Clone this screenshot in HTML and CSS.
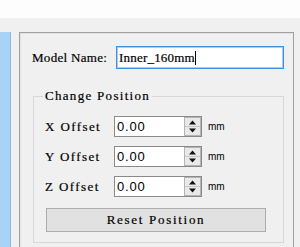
FILE: index.html
```html
<!DOCTYPE html>
<html>
<head>
<meta charset="utf-8">
<link rel="stylesheet" href="styles.css">
</head>
<body>
<div class="top"></div>
<div class="main">
  <div class="side"></div>
  <div class="panel">
    <div class="name-row">
      <span class="name-label">Model Name:</span>
      <div class="name-input"><span>Inner_160mm</span><span class="caret"></span></div>
    </div>
    <fieldset class="group">
      <legend>Change Position</legend>
      <div class="rows">
        <span class="lbl">X Offset</span>
        <div class="spin"><span class="val">0.00</span><svg class="btns" width="17" height="19" viewBox="0 0 17 19"><rect x="0.5" y="0.5" width="16" height="18" fill="#e9e9e9" stroke="#b4b4b4"/><line x1="1" y1="9.5" x2="16" y2="9.5" stroke="#c8c8c8"/><path d="M8.5 3.5 L12 7.5 L5 7.5 Z" fill="#111"/><path d="M5 11.5 L12 11.5 L8.5 15.5 Z" fill="#111"/></svg></div>
        <span class="unit">mm</span>

        <span class="lbl">Y Offset</span>
        <div class="spin"><span class="val">0.00</span><svg class="btns" width="17" height="19" viewBox="0 0 17 19"><rect x="0.5" y="0.5" width="16" height="18" fill="#e9e9e9" stroke="#b4b4b4"/><line x1="1" y1="9.5" x2="16" y2="9.5" stroke="#c8c8c8"/><path d="M8.5 3.5 L12 7.5 L5 7.5 Z" fill="#111"/><path d="M5 11.5 L12 11.5 L8.5 15.5 Z" fill="#111"/></svg></div>
        <span class="unit">mm</span>

        <span class="lbl">Z Offset</span>
        <div class="spin"><span class="val">0.00</span><svg class="btns" width="17" height="19" viewBox="0 0 17 19"><rect x="0.5" y="0.5" width="16" height="18" fill="#e9e9e9" stroke="#b4b4b4"/><line x1="1" y1="9.5" x2="16" y2="9.5" stroke="#c8c8c8"/><path d="M8.5 3.5 L12 7.5 L5 7.5 Z" fill="#111"/><path d="M5 11.5 L12 11.5 L8.5 15.5 Z" fill="#111"/></svg></div>
        <span class="unit">mm</span>
      </div>
      <div class="reset">Reset Position</div>
    </fieldset>
  </div>
</div>
</body>
</html>
```
FILE: styles.css
```css
html, body {
  margin: 0;
  padding: 0;
  width: 300px;
  height: 247px;
  overflow: hidden;
  background: #f0f0f0;
  font-family: "Liberation Serif", "DejaVu Serif", serif;
  font-size: 13px;
  color: #000;
}
.top {
  height: 18px;
  background: #fdfdfd;
}
.main {
  display: flex;
  margin-top: 14px;
  height: 215px;
  overflow: hidden;
}
.side {
  width: 10px;
  background: #a9d3f6;
  border-right: 1px solid #8fb6d8;
}
.panel {
  margin-left: 8px;
  width: 275px;
  height: 240px;
  box-sizing: border-box;
  border: 1px solid #a0a0a0;
  box-shadow: inset 1px 1px 0 #e2e2e2;
  padding: 13px 0 0 12px;
}
.name-row {
  display: flex;
  align-items: center;
  height: 23px;
}
.name-label {
  width: 84px;
  letter-spacing: 0.3px;
  -webkit-text-stroke: 0.2px #000;
}
.name-input {
  width: 168px;
  height: 23px;
  box-sizing: border-box;
  border: 1px solid #3f8fde;
  box-shadow: inset 0 0 0 1px #a9cdf1;
  background: #fff;
  display: flex;
  align-items: center;
  padding-left: 2px;
  letter-spacing: 0.2px;
  -webkit-text-stroke: 0.2px #000;
}
.caret {
  width: 1px;
  height: 14px;
  background: #000;
  margin-left: 0;
}
.group {
  margin: 20px 0 0 1px;
  width: 251px;
  box-sizing: border-box;
  border: 1px solid #d8d8d8;
  padding: 13px 0 10px 9px;
}
.group legend {
  padding: 0 2px;
  line-height: 14px;
  letter-spacing: 1.3px;
  -webkit-text-stroke: 0.2px #000;
}
.rows {
  display: grid;
  grid-template-columns: 63px 88px auto;
  column-gap: 6px;
  row-gap: 9px;
  align-items: center;
  margin-left: 2px;
}
.lbl {
  letter-spacing: 1.4px;
  -webkit-text-stroke: 0.2px #000;
}
.spin {
  height: 21px;
  box-sizing: border-box;
  border: 1px solid #8a8a8a;
  background: #fff;
  display: flex;
  align-items: center;
  justify-content: space-between;
  padding: 0 0 0 2px;
  font-family: "Liberation Sans", Arial, sans-serif;
  font-size: 13px;
}
.val {
  letter-spacing: 0.8px;
}
.btns {
  display: block;
}
.unit {
  font-family: "Liberation Sans", Arial, sans-serif;
  font-size: 10px;
}
.reset {
  margin: 11px 0 0 3px;
  width: 220px;
  height: 24px;
  box-sizing: border-box;
  border: 1px solid #adadad;
  background: #e1e1e1;
  display: flex;
  align-items: center;
  justify-content: center;
  letter-spacing: 1.7px;
  -webkit-text-stroke: 0.2px #000;
}
```
